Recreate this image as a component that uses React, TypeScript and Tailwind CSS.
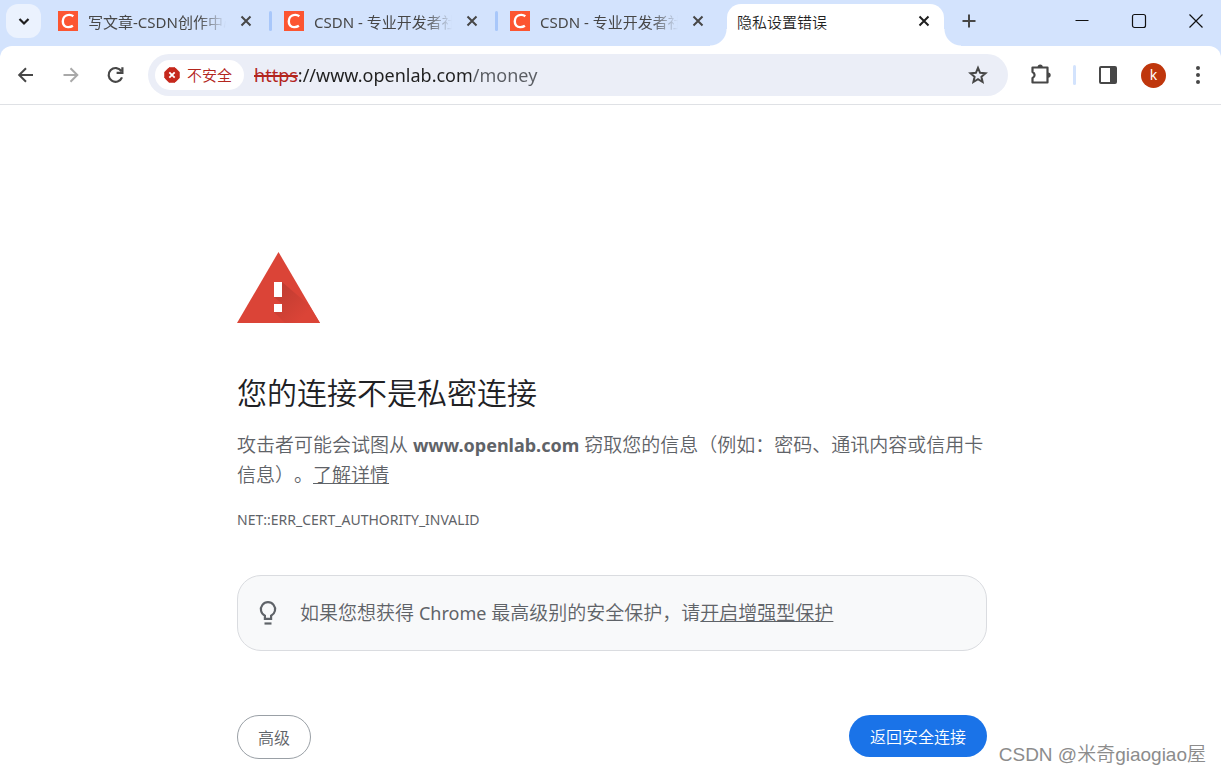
import { useState, type ReactNode } from "react";

function CsdnLogo() {
  return (
    <svg className="size-5 shrink-0" viewBox="0 0 20 20" aria-hidden="true">
      <rect width="20" height="20" fill="#fc5531" />
      <path
        d="M15.3 5.2C13.9 4.1 12.3 3.7 10.6 3.9C7.2 4.2 4.9 6.8 4.8 10.2C4.7 13.6 6.7 16.1 10 16.1C11.8 16.2 13.5 15.7 14.9 14.8"
        fill="none"
        stroke="#fff"
        strokeWidth="2.4"
      />
    </svg>
  );
}

function CloseGlyph() {
  return (
    <svg className="size-5" viewBox="0 0 20 20" fill="none" stroke="currentColor" strokeWidth="2" aria-hidden="true">
      <path d="M5.5 5.5l9 9M14.5 5.5l-9 9" />
    </svg>
  );
}

function BackgroundTab({ title, divider }: { title: string; divider: boolean }) {
  return (
    <div className="flex w-[226px] min-w-0 items-center gap-[10px] pl-[10px]">
      <CsdnLogo />
      <button
        type="button"
        className="min-w-0 flex-1 overflow-hidden pt-px text-left text-[15px] leading-5 font-normal whitespace-nowrap text-[#474747] [mask-image:linear-gradient(to_right,#000_80%,transparent)]"
      >
        {title}
      </button>
      <button type="button" aria-label="关闭标签页" className="text-[#474747]">
        <CloseGlyph />
      </button>
      <span className={divider ? "mr-[2px] ml-[3px] h-5 w-[3px] rounded-full bg-[#a8c7fa]" : "mr-[2px] ml-[3px] w-[3px]"} />
    </div>
  );
}

function TabStrip() {
  return (
    <header className="flex h-[46px] items-stretch bg-[#d3e3fd] pl-[6px]">
      <button
        type="button"
        aria-label="搜索标签页"
        className="mt-1 mr-[7px] flex h-[34px] w-[35px] shrink-0 items-center justify-center rounded-xl bg-[#ebf2fe] text-[#1f1f1f]"
      >
        <svg className="size-5" viewBox="0 0 20 20" fill="none" stroke="currentColor" strokeWidth="2.2" aria-hidden="true">
          <path d="M5.5 8l4.5 4.5L14.500 8" />
        </svg>
      </button>
      <nav aria-label="标签页" className="flex min-w-0 pr-px pb-1">
        <BackgroundTab title="写文章-CSDN创作中心" divider />
        <BackgroundTab title="CSDN - 专业开发者社区" divider />
        <BackgroundTab title="CSDN - 专业开发者社区" divider={false} />
      </nav>
      <div className="relative mt-1 flex w-[217px] min-w-0 items-center rounded-t-[14px] bg-white px-[10px] pb-2 text-[#1f1f1f]">
        <span className="absolute bottom-0 -left-[17px] size-[17px] bg-[radial-gradient(circle_at_0_0,#d3e3fd_16px,#fff_17px)]" />
        <span className="absolute -right-[17px] bottom-0 size-[17px] bg-[radial-gradient(circle_at_100%_0,#d3e3fd_16px,#fff_17px)]" />
        <button type="button" className="min-w-0 flex-1 truncate pt-px text-left text-[15px] leading-5">
          隐私设置错误
        </button>
        <button type="button" aria-label="关闭标签页">
          <CloseGlyph />
        </button>
      </div>
      <button type="button" aria-label="新标签页" className="ml-[15px] pb-1 text-[#474747]">
        <svg className="size-5" viewBox="0 0 20 20" fill="none" stroke="currentColor" strokeWidth="2" aria-hidden="true">
          <path d="M10 3.500v13M3.500 10h13" />
        </svg>
      </button>
      <div className="ml-auto flex shrink-0 pr-px pb-[5px] text-[#111]">
        <button type="button" aria-label="最小化" className="flex w-[57px] items-center justify-center">
          <svg className="size-4" viewBox="0 0 16 16" fill="none" stroke="currentColor" aria-hidden="true">
            <path d="M1.500 7.500h13" />
          </svg>
        </button>
        <button type="button" aria-label="最大化" className="flex w-[57px] items-center justify-center">
          <svg className="size-4" viewBox="0 0 16 16" fill="none" stroke="currentColor" strokeWidth="1.2" aria-hidden="true">
            <rect x="1.500" y="1.500" width="13" height="13" rx="2" />
          </svg>
        </button>
        <button type="button" aria-label="关闭" className="flex w-[53px] items-center justify-center pl-[4px]">
          <svg className="size-4" viewBox="0 0 16 16" fill="none" stroke="currentColor" strokeWidth="1.2" aria-hidden="true">
            <path d="M1.500 1.500l13 13M14.500 1.500l-13 13" />
          </svg>
        </button>
      </div>
    </header>
  );
}

function ToolButton({ label, className, children }: { label: string; className: string; children: ReactNode }) {
  return (
    <button type="button" aria-label={label} className={`flex size-6 shrink-0 items-center justify-center ${className}`}>
      <svg className="size-6" viewBox="0 0 24 24" fill="none" stroke="currentColor" strokeWidth="2" aria-hidden="true">
        {children}
      </svg>
    </button>
  );
}

function Toolbar() {
  const [address, setAddress] = useState("://www.openlab.com/money");
  return (
    <div className="bg-[#d3e3fd]">
      <div className="flex h-[59px] items-center rounded-t-xl border-b border-[#dfe1e5] bg-white pr-[11px] pl-[14px]">
        <div className="flex gap-[21px] text-[#474747]">
          <ToolButton label="返回" className="">
            <path d="M19 12H6M12 5.200L5.200 12l6.800 6.800" />
          </ToolButton>
          <ToolButton label="前进" className="text-[#a9a9a9]">
            <path d="M4.500 12H18M11.500 5.200l6.800 6.800-6.800 6.800" />
          </ToolButton>
          <ToolButton label="重新加载" className="">
            <path d="M17.400 8.200A6.900 6.900 0 1 0 18 14.400M18.400 4.200v5.600h-5.800" strokeWidth="2.200" />
          </ToolButton>
        </div>
        <div className="ml-5 flex h-[42px] min-w-0 flex-1 items-center rounded-full bg-[#ebeef7] pr-[18px] pl-[7px]">
          <button
            type="button"
            className="flex h-[30px] shrink-0 items-center gap-[7px] rounded-full bg-white pr-3 pl-[9px] text-[15px] leading-5 text-[#b3261e]"
          >
            <svg className="size-4" viewBox="0 0 16 16" aria-hidden="true">
              <path d="M5 .8h6L15.200 5v6L11 15.200H5L.8 11V5z" fill="#c5281c" stroke="#c5281c" strokeLinejoin="round" />
              <path d="M5.300 5.300l5.400 5.400M10.700 5.300l-5.400 5.400" stroke="#fff" strokeWidth="1.800" />
            </svg>
            不安全
          </button>
          <label htmlFor="address" className="ml-[10px] text-[18px] leading-6 font-normal text-[#b3261e] line-through decoration-2">
            https
          </label>
          <input
            id="address"
            type="text"
            value={address}
            onChange={(event) => setAddress(event.target.value)}
            className="h-6 min-w-0 flex-1 bg-[linear-gradient(to_right,#1f1f1f_173px,#5a5d63_173px)] bg-clip-text text-[18px] leading-6 font-normal text-transparent caret-[#1f1f1f] outline-none"
          />
          <ToolButton label="为此标签页添加书签" className="text-[#474747]">
            <path d="M12 4.800l2.100 5 5.400.5-4.100 3.500 1.200 5.200-4.600-2.800-4.600 2.800 1.200-5.200-4.100-3.500 5.400-.5z" strokeWidth="2" />
          </ToolButton>
        </div>
        <div className="ml-[21px] flex shrink-0 items-center text-[#474747]">
          <ToolButton label="扩展程序" className="">
            <path d="M3.500 4.500H18.500v15H3.500v-4.400c2.800-1.400 2.800-4.600 0-6z" strokeLinejoin="round" strokeWidth="2.200" />
            <path d="M8.600 4a2.600 2.600 0 0 1 5.200 0zM19 9.400a2.700 2.700 0 0 1 0 5.400z" fill="currentColor" stroke="none" />
          </ToolButton>
          <span className="mx-5 h-5 w-[3px] rounded-full bg-[#d3e3fd]" />
          <ToolButton label="侧边栏" className="">
            <rect x="4" y="4" width="16" height="16" rx="1" />
            <path d="M14 4h6v16h-6z" fill="currentColor" stroke="none" />
          </ToolButton>
          <button
            type="button"
            aria-label="个人资料"
            className="mr-5 ml-[21px] flex size-[25px] items-center justify-center rounded-full bg-[#bf360c] text-[14px] leading-5 font-normal text-white"
          >
            k
          </button>
          <ToolButton label="更多" className="">
            <g fill="currentColor" stroke="none">
              <circle cx="12" cy="5" r="2" />
              <circle cx="12" cy="12" r="2" />
              <circle cx="12" cy="19" r="2" />
            </g>
          </ToolButton>
        </div>
      </div>
    </div>
  );
}

function WarningTriangle() {
  return (
    <svg className="h-[71px] w-[83px]" viewBox="0 0 83 71" role="img" aria-label="警告">
      <defs>
        <linearGradient id="shade" x1="40" y1="36" x2="68" y2="64" gradientUnits="userSpaceOnUse">
          <stop offset="0" stopColor="#c03c31" />
          <stop offset="1" stopColor="#db4437" />
        </linearGradient>
      </defs>
      <path d="M41.500 0L83 71H0z" fill="#db4437" />
      <path d="M45 30l27 23 11 18H48L37 60l8-8-8-7z" fill="url(#shade)" />
      <path d="M37 30h8v15h-8zM37 52h8v8h-8z" fill="#fff" />
    </svg>
  );
}

export default function App() {
  return (
    <div className="relative flex min-h-screen flex-col overflow-hidden bg-white font-['Noto_Sans','Noto_Sans_CJK_SC',sans-serif] font-[350]">
      <TabStrip />
      <Toolbar />
      <main className="pt-[147px] pb-[15px] pl-[3px] text-[#5f6368]">
        <div className="mx-auto w-full max-w-[750px]">
          <WarningTriangle />
          <h1 className="mt-[52px] text-[30px] leading-9 font-[350] text-[#202124]">您的连接不是私密连接</h1>
          <p className="mt-[19px] text-[19px] leading-[30px] [text-spacing-trim:space-all]">
            攻击者可能会试图从 <strong className="text-[18px] font-bold">www.openlab.com</strong> 窃取您的信息（例如：密码、通讯内容或信用卡信息）。
            <a href="#details" className="underline">
              了解详情
            </a>
          </p>
          <p className="mt-5 text-[14px] leading-5 font-normal">NET::ERR_CERT_AUTHORITY_INVALID</p>
          <div className="mt-[45px] flex min-h-[76px] items-center gap-5 rounded-3xl border border-[#dadce0] bg-[#f8f9fa] px-[18px]">
            <svg className="size-6 shrink-0" viewBox="0 0 24 24" fill="none" stroke="#5f6368" strokeWidth="2.2" aria-hidden="true">
              <path d="M8.900 17.900v-3.200a7.100 7.100 0 1 1 6.200 0v3.200z" />
              <path d="M8.500 22.500h7" />
            </svg>
            <p className="text-[19px] leading-[30px]">
              如果您想获得 <span className="text-[18px] font-normal">Chrome</span> 最高级别的安全保护，请
              <a href="#enhanced-protection" className="underline">
                开启增强型保护
              </a>
            </p>
          </div>
          <div className="mt-16 flex items-start justify-between">
            <button type="button" className="rounded-full border border-[#9aa0a6] px-5 pt-[10px] pb-2 text-[16px] leading-6">
              高级
            </button>
            <button type="button" className="rounded-full bg-[#1a73e8] px-[21px] pt-[10px] pb-2 text-[16px] leading-6 text-white">
              返回安全连接
            </button>
          </div>
        </div>
      </main>
      <p className="absolute right-[15px] bottom-[7px] font-['Liberation_Sans','Noto_Sans_CJK_SC',sans-serif] text-[19px] leading-6 text-[#8c8c8c]">
        CSDN @米奇giaogiao屋
      </p>
    </div>
  );
}
